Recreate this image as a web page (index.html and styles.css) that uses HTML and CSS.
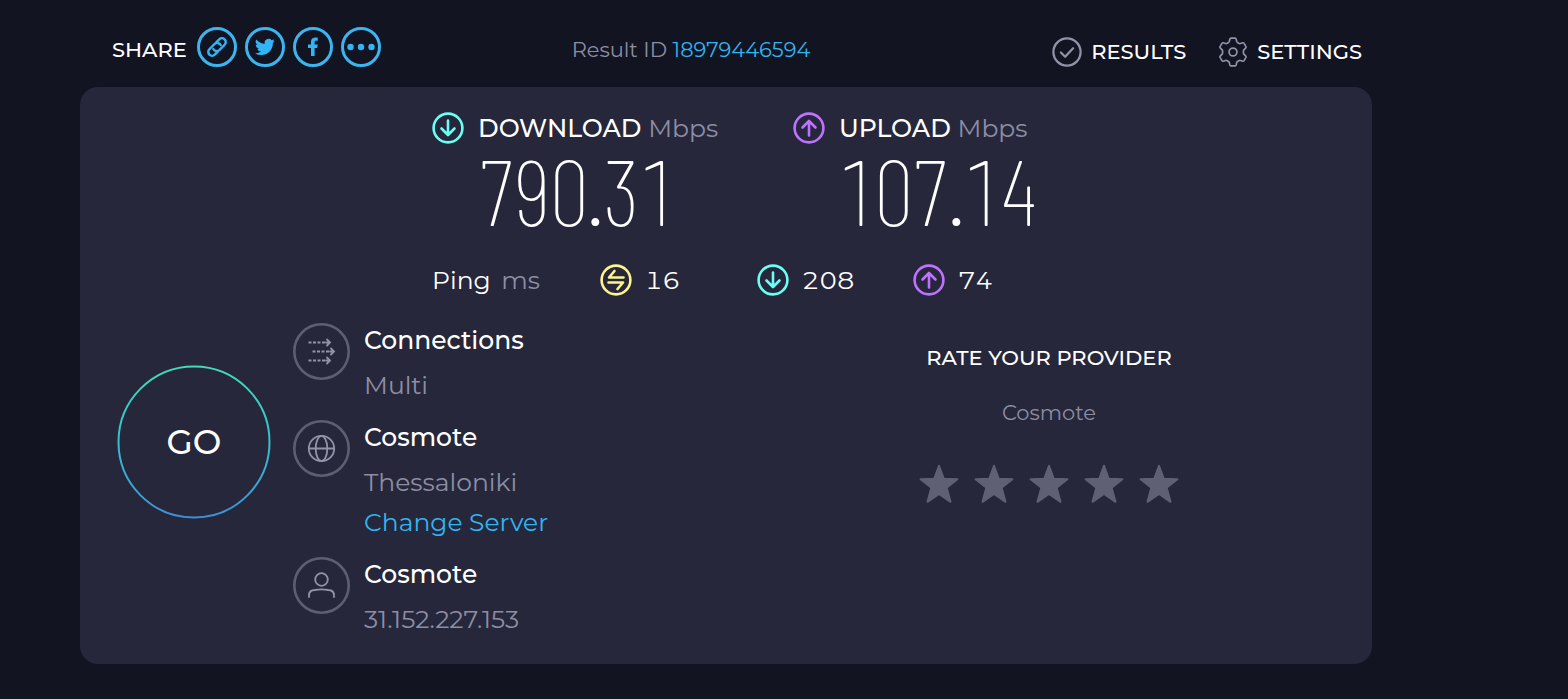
FILE: index.html
```html
<!DOCTYPE html>
<html lang="en">
	<head>
		<meta charset="UTF-8">
		<meta name="viewport" content="width=device-width, initial-scale=1.0">
		<title>Speedtest</title>
		<link rel="stylesheet" href="styles.css">
	</head>
	<body>
	<!-- icons used more than once -->
	<svg class="defs" aria-hidden="true">
		<symbol id="down" viewBox="0 0 32 32">
			<circle cx="16" cy="16" r="14.4"/>
			<path d="M16 8.5v14M9.5 16.5l6.5 6.500 6.500-6.500"/>
		</symbol>
		<symbol id="up" viewBox="0 0 32 32">
			<circle cx="16" cy="16" r="14.4"/>
			<path d="M16 23.5v-14M9.5 15.5l6.5-6.500 6.500 6.500"/>
		</symbol>
		<symbol id="star" viewBox="0 0 40 40">
			<path d="M20 1.800l4.700 12.900 13.700.5-10.800 8.400 3.900 14.200L20 30 8.500 37.800l3.900-14.200-10.800-8.400 13.700-.5z"/>
		</symbol>
	</svg>
	<div class="page">
		<header class="header">
			<div class="share">
				<span class="share-label">SHARE</span>
				<a class="share-link" href="#" aria-label="Copy link">
					<svg viewBox="3 3 34 34"><g class="chain" transform="rotate(-45 20 20)"><path d="M17 23.800h-4a3.800 3.800 0 0 1 0-7.600h7.500a3.800 3.800 0 0 1 3.500 5"/><path d="M23 16.200h4a3.800 3.800 0 0 1 0 7.600h-7.500a3.800 3.800 0 0 1-3.500-5"/></g></svg>
				</a>
				<a class="share-link" href="#" aria-label="Twitter">
					<svg viewBox="3 3 34 34"><path transform="translate(10 10) scale(.83)" d="M23.95 4.57a10 10 0 0 1-2.82.77 4.96 4.96 0 0 0 2.16-2.72c-.95.55-2 .95-3.13 1.18a4.92 4.92 0 0 0-8.38 4.48A13.94 13.94 0 0 1 1.64 3.16a4.92 4.92 0 0 0 1.52 6.57 4.9 4.9 0 0 1-2.23-.61v.06a4.92 4.92 0 0 0 3.95 4.83 5 5 0 0 1-2.21.08 4.94 4.94 0 0 0 4.6 3.42A9.87 9.87 0 0 1 0 19.54a13.94 13.94 0 0 0 7.55 2.21c9.05 0 14-7.5 14-13.98 0-.21 0-.42-.02-.63a9.94 9.94 0 0 0 2.42-2.57z"/></svg>
				</a>
				<a class="share-link" href="#" aria-label="Facebook">
					<svg viewBox="3 3 34 34"><path d="M18 29v-8h-3v-3.600h3v-2.600c0-3.200 1.900-4.400 4.400-4.400l2.300.1v3.200h-1.600c-1.200 0-1.500.6-1.500 1.600v2.100h3.100l-.5 3.600h-2.600v8z"/></svg>
				</a>
				<a class="share-link" href="#" aria-label="More">
					<svg viewBox="3 3 34 34"><circle cx="9.500" cy="20" r="3.200"/><circle cx="20" cy="20" r="3.200"/><circle cx="30.500" cy="20" r="3.200"/></svg>
				</a>
			</div>
			<div class="result-id">Result ID <a href="#">18979446594</a></div>
			<nav class="nav">
				<a href="#">
					<svg class="icon nav-icon" viewBox="0 0 32 32"><circle cx="16" cy="16" r="14.500"/><path d="M9.500 16.500l4.500 4.500 8.500-9"/></svg>
					RESULTS
				</a>
				<a href="#">
					<svg class="icon nav-icon thin" viewBox="0 0 32 32"><circle cx="16" cy="16" r="4.200"/><path d="M14 1.200h4q1 0 1.300 1l.6 2.400q.3 1 1.200 1.500l1 .6q.9.500 1.900.2l2.300-.7q1-.3 1.500.6l2 3.400q.5.900-.3 1.600l-1.700 1.700q-.7.700-.7 1.700v1.600q0 1 .7 1.700l1.700 1.700q.8.700.3 1.600l-2 3.400q-.5.900-1.500.6l-2.300-.7q-1-.3-1.900.2l-1 .6q-.9.500-1.200 1.500l-.6 2.400q-.3 1-1.300 1h-4q-1 0-1.300-1l-.6-2.400q-.3-1-1.200-1.500l-1-.6q-.9-.500-1.900-.2l-2.300.7q-1 .3-1.500-.6l-2-3.400q-.5-.900.3-1.600l1.700-1.700q.7-.7.7-1.700v-1.600q0-1-.7-1.700l-1.700-1.700q-.8-.7-.3-1.600l2-3.400q.5-.900 1.500-.6l2.300.7q1 .3 1.900-.2l1-.6q.9-.500 1.200-1.500l.6-2.400q.3-1 1.300-1z"/></svg>
					SETTINGS
				</a>
			</nav>
		</header>

		<main class="card">
			<div class="speeds">
				<section class="speed">
					<svg class="icon teal"><use href="#down"/></svg>
					<h2>DOWNLOAD <span>Mbps</span></h2>
					<div class="number">790.31</div>
				</section>
				<section class="speed">
					<svg class="icon purple"><use href="#up"/></svg>
					<h2>UPLOAD <span>Mbps</span></h2>
					<div class="number">107.14</div>
				</section>
			</div>

			<div class="pings">
				<div>Ping <span class="muted">ms</span></div>
				<div class="ping">
					<svg class="icon yellow" viewBox="0 0 32 32"><circle cx="16" cy="16" r="14.400"/><path d="M23.500 13.500H9l5.500-6.500M8.500 18.500H23l-5.500 6.500"/></svg>
					16
				</div>
				<div class="ping"><svg class="icon teal"><use href="#down"/></svg>208</div>
				<div class="ping"><svg class="icon purple"><use href="#up"/></svg>74</div>
			</div>

			<div class="bottom">
				<div class="server">
					<button class="go" type="button">
						<svg viewBox="0 0 154 154" aria-hidden="true">
							<defs>
								<linearGradient id="ring" x1="0" y1="0" x2="0" y2="1">
									<stop offset="0" stop-color="#3fdcb6"/>
									<stop offset=".5" stop-color="#38bfd0"/>
									<stop offset="1" stop-color="#3b91d6"/>
								</linearGradient>
							</defs>
							<circle cx="77" cy="77" r="75.500"/>
						</svg>
						<span>GO</span>
					</button>
					<div class="details">
						<div class="detail">
							<svg class="detail-icon" viewBox="0 0 57 57">
								<circle class="rim" cx="28.500" cy="28.500" r="27.200"/>
								<path class="dots" d="M15.500 19.500h17M19.500 28.500h17M15.500 37.500h17"/>
								<path d="M34 16.500l3 3-3 3M38 25.500l3 3-3 3M34 34.500l3 3-3 3M33 19.500h4M37 28.500h4M33 37.500h4"/>
							</svg>
							<div>
								<h3>Connections</h3>
								<p>Multi</p>
							</div>
						</div>
						<div class="detail">
							<svg class="detail-icon" viewBox="0 0 57 57">
								<circle class="rim" cx="28.500" cy="28.500" r="27.200"/>
								<circle cx="28.500" cy="28.500" r="12.700"/>
								<ellipse cx="28.500" cy="28.500" rx="5.800" ry="12.700"/>
								<path d="M15.800 28.500h25.400"/>
							</svg>
							<div>
								<h3>Cosmote</h3>
								<p>Thessaloniki</p>
								<a href="#">Change Server</a>
							</div>
						</div>
						<div class="detail">
							<svg class="detail-icon" viewBox="0 0 57 57">
								<circle class="rim" cx="28.500" cy="28.500" r="27.200"/>
								<circle cx="28.500" cy="22.500" r="6.300"/>
								<path d="M16 40v-1.500c0-3.500 2.500-5.500 6-5.500 4-.8 9-.8 13 0 3.500 0 6 2 6 5.500v1.500"/>
							</svg>
							<div>
								<h3>Cosmote</h3>
								<p>31.152.227.153</p>
							</div>
						</div>
					</div>
				</div>
				<section class="rate">
					<h4>RATE YOUR PROVIDER</h4>
					<p>Cosmote</p>
					<div class="stars">
						<button type="button" aria-label="1 star"><svg><use href="#star"/></svg></button>
						<button type="button" aria-label="2 stars"><svg><use href="#star"/></svg></button>
						<button type="button" aria-label="3 stars"><svg><use href="#star"/></svg></button>
						<button type="button" aria-label="4 stars"><svg><use href="#star"/></svg></button>
						<button type="button" aria-label="5 stars"><svg><use href="#star"/></svg></button>
					</div>
				</section>
			</div>
		</main>
	</div>
	</body>
</html>
```
FILE: styles.css
```css
* {
	box-sizing: border-box;
}

body {
	margin: 0;
	background-color: #121422;
	color: #fff;
	font-family: Montserrat, Inter, sans-serif;
	font-size: 25px;
	line-height: 32px;
}

h2, h3, h4, p {
	margin: 0;
	font-size: inherit;
	font-weight: 500;
}

a {
	color: #32b4f0;
	text-decoration: none;
}

button {
	padding: 0;
	border: 0;
	background: none;
	color: inherit;
	font: inherit;
	cursor: pointer;
}

svg {
	display: block;
	flex: none;
}

.defs {
	display: none;
}

.page {
	margin: 0 196px 0 80px;
}

/* header */

.header {
	display: grid;
	grid-template-columns: 5fr auto 6fr;
	align-items: center;
	padding: 26px 10px 19px 32px;
	font-size: 21px;
	white-space: nowrap;
}

.share {
	display: flex;
	align-items: center;
	gap: 8px;
}

.share-label {
	padding: 6px 2px 0 0;
	font-weight: 500;
}

.share-link {
	border: 3px solid #3bb4f0;
	border-radius: 50%;
}

.share-link svg {
	width: 34px;
	height: 34px;
	fill: #32b4f7;
}

.share-link .chain {
	fill: none;
	stroke: #32b4f7;
	stroke-width: 2.4;
	stroke-linecap: round;
}

.result-id {
	padding-top: 6px;
	color: #8d8ea3;
}

.nav {
	display: flex;
	justify-content: flex-end;
	gap: 32px;
	padding-top: 10px;
	font-weight: 500;
}

.nav a {
	display: flex;
	align-items: center;
	gap: 9px;
	color: #fff;
}

/* result card */

.card {
	padding: 25px 0;
	border-radius: 18px;
	background-color: #26273b;
}

.icon {
	width: 32px;
	height: 32px;
	fill: none;
	stroke: currentColor;
	stroke-width: 2.6;
	stroke-linecap: round;
	stroke-linejoin: round;
}

.nav-icon {
	width: 30px;
	height: 30px;
	color: #9193a8;
	stroke-width: 2.4;
}

.thin {
	stroke-width: 1.8;
}

.teal {
	color: #6afff3;
}

.purple {
	color: #bf71ff;
}

.yellow {
	color: #fff38e;
}

.speeds {
	display: grid;
	grid-template-columns: 361px 227px;
	justify-content: center;
	white-space: nowrap;
}

.speed {
	display: grid;
	grid-template-columns: 32px auto;
	justify-content: start;
	column-gap: 14px;
}

.speed h2 span,
.muted {
	color: #8d8ea3;
	font-weight: 400;
}

.number {
	grid-column: 2;
	margin-bottom: 6px;
	font-family: "Barlow Condensed", "Roboto Condensed", Roboto, sans-serif;
	font-size: 92px;
	font-variant-numeric: tabular-nums;
	font-weight: 200;
	line-height: 90px;
}

.pings {
	display: grid;
	grid-template-columns: 168px 157px 156px 107px;
	justify-content: center;
	margin: 24px 0;
}

.ping {
	display: flex;
	gap: 13px;
	font-variant-numeric: tabular-nums;
}

.muted {
	margin-left: 4px;
}

.bottom {
	display: grid;
	grid-template-columns: 1fr 1fr;
}

.server {
	display: flex;
	align-items: flex-start;
	gap: 22px;
	padding-left: 37px;
}

.go {
	display: grid;
	place-items: center;
	margin-top: 45px;
	font-size: 34px;
	font-weight: 500;
}

.go svg,
.go span {
	grid-area: 1 / 1;
}

.go svg {
	width: 154px;
	height: 154px;
	fill: none;
	stroke: url(#ring);
	stroke-width: 2;
}

.details {
	display: grid;
	gap: 12px;
	line-height: 40px;
}

.detail {
	display: flex;
	gap: 14px;
}

.detail h3 {
	margin-bottom: 5px;
}

.detail p,
.rate p {
	color: #8d8ea3;
	font-weight: 400;
}

.detail a {
	display: block;
}

.detail-icon {
	width: 57px;
	height: 57px;
	margin-top: 3px;
	fill: none;
	stroke: #9193a8;
	stroke-width: 1.8;
	stroke-linecap: round;
}

.detail-icon .rim {
	stroke: #5d5e70;
	stroke-width: 2.6;
}

.detail-icon .dots {
	stroke-linecap: butt;
	stroke-dasharray: 3 1.5;
}

.rate {
	padding-top: 22px;
	font-size: 21px;
	text-align: center;
}

.rate p {
	margin: 23px 0 35px;
}

.stars {
	display: flex;
	justify-content: center;
	gap: 15px;
}

.stars svg {
	width: 40px;
	height: 40px;
	fill: #5f6073;
	stroke: #5f6073;
	stroke-width: 2;
	stroke-linejoin: round;
}
```
